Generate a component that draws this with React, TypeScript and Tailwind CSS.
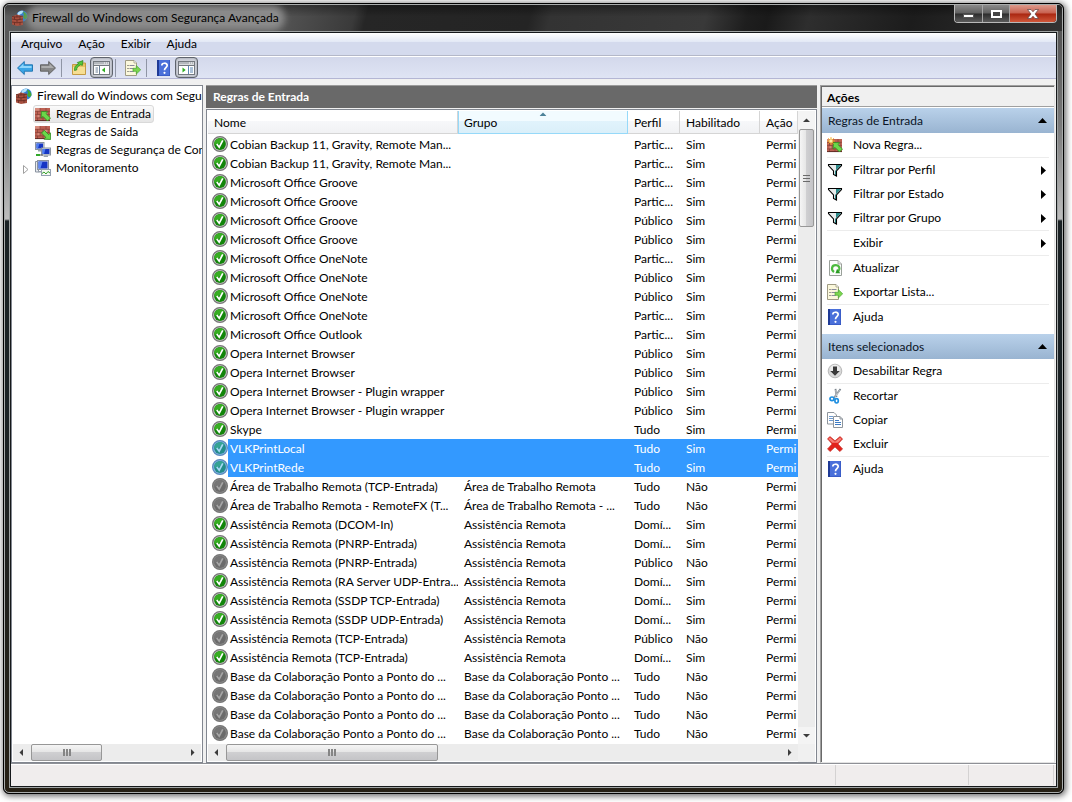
import { useState } from 'react';
import type { ReactNode } from 'react';

type Status = 'on' | 'off';

interface Rule {
  name: string;
  group: string;
  profile: string;
  enabled: string;
  status: Status;
}

const rule = (name: string, group: string, profile: string, enabled: string): Rule => ({
  name,
  group,
  profile,
  enabled,
  status: enabled === 'Sim' ? 'on' : 'off',
});

const RULES: Rule[] = [
  rule('Cobian Backup 11, Gravity, Remote Man...', '', 'Partic...', 'Sim'),
  rule('Cobian Backup 11, Gravity, Remote Man...', '', 'Partic...', 'Sim'),
  rule('Microsoft Office Groove', '', 'Partic...', 'Sim'),
  rule('Microsoft Office Groove', '', 'Partic...', 'Sim'),
  rule('Microsoft Office Groove', '', 'Público', 'Sim'),
  rule('Microsoft Office Groove', '', 'Público', 'Sim'),
  rule('Microsoft Office OneNote', '', 'Partic...', 'Sim'),
  rule('Microsoft Office OneNote', '', 'Público', 'Sim'),
  rule('Microsoft Office OneNote', '', 'Público', 'Sim'),
  rule('Microsoft Office OneNote', '', 'Partic...', 'Sim'),
  rule('Microsoft Office Outlook', '', 'Partic...', 'Sim'),
  rule('Opera Internet Browser', '', 'Público', 'Sim'),
  rule('Opera Internet Browser', '', 'Público', 'Sim'),
  rule('Opera Internet Browser - Plugin wrapper', '', 'Público', 'Sim'),
  rule('Opera Internet Browser - Plugin wrapper', '', 'Público', 'Sim'),
  rule('Skype', '', 'Tudo', 'Sim'),
  rule('VLKPrintLocal', '', 'Tudo', 'Sim'),
  rule('VLKPrintRede', '', 'Tudo', 'Sim'),
  rule('Área de Trabalho Remota (TCP-Entrada)', 'Área de Trabalho Remota', 'Tudo', 'Não'),
  rule('Área de Trabalho Remota - RemoteFX (T...', 'Área de Trabalho Remota - ...', 'Tudo', 'Não'),
  rule('Assistência Remota (DCOM-In)', 'Assistência Remota', 'Domí...', 'Sim'),
  rule('Assistência Remota (PNRP-Entrada)', 'Assistência Remota', 'Domí...', 'Sim'),
  rule('Assistência Remota (PNRP-Entrada)', 'Assistência Remota', 'Público', 'Não'),
  rule('Assistência Remota (RA Server UDP-Entra...', 'Assistência Remota', 'Domí...', 'Sim'),
  rule('Assistência Remota (SSDP TCP-Entrada)', 'Assistência Remota', 'Domí...', 'Sim'),
  rule('Assistência Remota (SSDP UDP-Entrada)', 'Assistência Remota', 'Domí...', 'Sim'),
  rule('Assistência Remota (TCP-Entrada)', 'Assistência Remota', 'Público', 'Não'),
  rule('Assistência Remota (TCP-Entrada)', 'Assistência Remota', 'Domí...', 'Sim'),
  rule('Base da Colaboração Ponto a Ponto do ...', 'Base da Colaboração Ponto ...', 'Tudo', 'Não'),
  rule('Base da Colaboração Ponto a Ponto do ...', 'Base da Colaboração Ponto ...', 'Tudo', 'Não'),
  rule('Base da Colaboração Ponto a Ponto do ...', 'Base da Colaboração Ponto ...', 'Tudo', 'Não'),
  rule('Base da Colaboração Ponto a Ponto do ...', 'Base da Colaboração Ponto ...', 'Tudo', 'Não'),
];

/* ---------- icons ---------- */

function Icon({ children }: { children: ReactNode }) {
  return (
    <svg width="16" height="16" viewBox="0 0 16 16" className="block shrink-0" aria-hidden="true">
      {children}
    </svg>
  );
}

function Bricks() {
  return (
    <g transform="translate(0 2)">
      <rect width="15" height="13" fill="#bd6153" />
      <path d="M0 0h5v3H0zM9 3.500h4v3H9zM2.500 7H5v2.500H2.500z" fill="#d68b7c" />
      <path d="M0 3.300h15M0 6.600h15M0 9.900h15M5 0v3.300M11 0v3.300M2.500 3.300v3.300M8 3.300v3.300M13 3.300v3.300M5 6.600v3.300M11 6.600v3.300M2.500 9.900V13M8 9.900V13" stroke="#7d3d33" strokeWidth=".6" />
      <path d="M0 12.600h15" stroke="#4a201b" strokeWidth=".8" />
    </g>
  );
}

function FirewallIcon() {
  return (
    <Icon>
      <circle cx="10" cy="6" r="5.600" fill="#2f7fd6" />
      <path d="M6 2.500C8 .5 10 .4 11.500 1L10 3.500 7 5 5 5z" fill="#b5e4fb" />
      <path d="M11 1.500c3 1 4.600 3.500 4.500 6L13 9.500 11 7l1-2z" fill="#3fa836" />
      <path d="M0 6.500l5-2 6 1.500v9L5 16l-5-1.500z" fill="#a9503f" />
      <path d="M0 9l5 .8L11 9M0 12l5 .8 6-.8M5 4.500V7M2.500 7v2.300M8 7v2.500M5 10v2.500M2.500 12.500V15M8 12.500V15M0 6.500l5 .6 6-1" stroke="#5a271f" strokeWidth=".7" fill="none" />
    </Icon>
  );
}

const ARROW_IN = 'M6.300 5.500l6.400.2-1.700 1.900 4.500 4.400-3 3-4.500-4.600-1.800 1.700z';
const ARROW_OUT = 'M15.600 15.500l-6.600-.3 1.800-1.900-4.300-4.200 2.800-2.800 4.300 4.300 1.900-1.700z';

function InboundIcon() {
  return (
    <Icon>
      <Bricks />
      <path d={ARROW_IN} fill="#6bd84a" stroke="#2d8a20" strokeWidth=".8" />
    </Icon>
  );
}

function OutboundIcon() {
  return (
    <Icon>
      <Bricks />
      <path d={ARROW_OUT} fill="#6bd84a" stroke="#2d8a20" strokeWidth=".8" />
    </Icon>
  );
}

function NewRuleIcon() {
  return (
    <Icon>
      <Bricks />
      <path d={ARROW_IN} fill="#6bd84a" stroke="#2d8a20" strokeWidth=".8" />
      <path d="M4 .2v7.600M.2 4h7.600M1.300 1.300l5.400 5.400M6.700 1.300L1.300 6.700" stroke="#f5a71c" />
      <circle cx="4" cy="4" r="1.700" fill="#fff0a0" />
    </Icon>
  );
}

function ComputersIcon() {
  return (
    <Icon>
      <rect x=".5" y=".5" width="8.500" height="7" fill="#d9dde3" stroke="#8a93a0" />
      <rect x="1.500" y="1.500" width="6.500" height="5" fill="#1636c4" />
      <path d="M1.500 1.500h3l-1.500 5H1.500z" fill="#4f7df0" />
      <path d="M3 8h4v1.500H3z" fill="#9aa2ad" />
      <rect x="6.500" y="6" width="9" height="7" fill="#d9dde3" stroke="#8a93a0" />
      <rect x="7.500" y="7" width="7" height="5" fill="#1636c4" />
      <path d="M7.500 7h3L9 12H7.500z" fill="#4f7df0" />
      <path d="M9 13.500h4V15H8.500z" fill="#9aa2ad" />
      <path d="M1 12h4v2H1z" fill="#32a82a" />
      <path d="M5 13h3" stroke="#555" />
    </Icon>
  );
}

function MonitoringIcon() {
  return (
    <Icon>
      <path d="M.5 1.500h3V12h-3z" fill="#e6e9ee" stroke="#8a93a0" />
      <rect x="2.500" y=".5" width="11" height="9" fill="#d9dde3" stroke="#8a93a0" />
      <rect x="3.500" y="1.500" width="9" height="7" fill="#1636c4" />
      <path d="M3.500 1.500h4l-2 7h-2z" fill="#5f8af5" />
      <path d="M3 11h6v1.500H3z" fill="#9aa2ad" />
      <rect x="6.500" y="9.500" width="9" height="6" fill="#f4f8f2" stroke="#93a0b0" />
      <path d="M7 13.500l2-1.500 2 2 2-2.500 2 1.500" stroke="#35a32c" fill="none" />
    </Icon>
  );
}

function BackIcon() {
  return (
    <Icon>
      <path d="M.5 8L7.300 1.500v3.300h8.200v6.400H7.300v3.300z" fill="#3aa5e6" stroke="#1b6fae" strokeWidth=".9" />
      <path d="M2 7.900L6.400 3.700v2.200h8.200v2z" fill="#8fd6fb" />
    </Icon>
  );
}

function ForwardIcon() {
  return (
    <Icon>
      <path d="M15.500 8L8.700 1.500v3.300H.5v6.400h8.200v3.300z" fill="#868686" stroke="#5a5a5a" strokeWidth=".9" />
      <path d="M14 7.900L9.600 3.700v2.200H1.400v2z" fill="#adadad" />
    </Icon>
  );
}

function FolderUpIcon() {
  return (
    <Icon>
      <path d="M1.500 4.500h5L8 3h6.500v11.500h-13z" fill="#e8c465" stroke="#c39a44" />
      <path d="M2 7h12v7H2z" fill="#f6de93" />
      <path d="M3.500 10.500C3 7.500 4.500 5 7.500 4L6.300 2.500 12 .6 11.300 5.500 9.800 4.700C7.300 5.800 5.500 7.500 5.700 10z" fill="#55c83c" stroke="#2b8420" strokeWidth=".7" />
    </Icon>
  );
}

/* Console pane toggles, the tree on the left or the actions on the right */
function PaneIcon({ side }: { side: 'left' | 'right' }) {
  return (
    <svg width="17" height="14" viewBox="0 0 17 14" className="block shrink-0" aria-hidden="true">
      <rect x=".5" y=".5" width="16" height="13" fill="#fff" stroke="#74797f" />
      <path d="M1 1h15v2.500H1z" fill="#b4b8bd" />
      <path d="M11 2h1M13 2h1M15 2h1" stroke="#fff" />
      <path d="M1 4.500h15" stroke="#74797f" />
      {side === 'left' ? (
        <>
          <path d="M6.500 5v8M2.500 7h2.500M2.500 9h2.500M2.500 11h2.500" stroke="#6b7f97" />
          <path d="M12 6.500v5L8.800 9z" fill="#2fae22" />
        </>
      ) : (
        <>
          <path d="M10.500 5v8M12 7h3M12 9h3M12 11h3" stroke="#5b86b4" />
          <path d="M4.500 6.500v5L7.700 9z" fill="#2fae22" />
        </>
      )}
    </svg>
  );
}

function ExportIcon() {
  return (
    <Icon>
      <path d="M.5.500H9L11.500 3v12.500H.5z" fill="#fbf8dc" stroke="#a09c84" />
      <path d="M9 .5V3h2.500" fill="#fff" stroke="#a09c84" strokeWidth=".8" />
      <path d="M2.500 5.500h1M2.500 8.500h1M2.500 11.500h1" stroke="#444" />
      <path d="M4.500 5.500h5M4.500 8.500h4M4.500 11.500h4" stroke="#8a8a9c" />
      <path d="M8 8.300h3.300V5.500l4.400 4.300-4.400 4.300v-2.800H8z" fill="#7bd64e" stroke="#4ba633" strokeWidth=".7" />
    </Icon>
  );
}

function HelpIcon() {
  return (
    <Icon>
      <rect x="1" width="13" height="16" fill="#2a4bb5" />
      <path d="M3 0h10.500v15.500H3z" fill="#4a70da" />
      <path d="M1 0h2v16H1z" fill="#1f3a96" />
      <path d="M5.800 5.500C5.800 2.500 11.200 2.500 11.200 5.300 11.200 7.600 8.500 7.600 8.500 10.200" stroke="#fff" strokeWidth="1.700" fill="none" />
      <circle cx="8.500" cy="12.800" r="1.100" fill="#fff" />
    </Icon>
  );
}

function FilterIcon() {
  return (
    <Icon>
      <path d="M1.500 2.500h13v1L9.500 9v5l-3-1.500V9l-5-5.500z" fill="#e8ecec" />
      <path d="M9 3h5L9 8.500z" fill="#2b8a8a" />
      <path d="M8 9l1-1v5.500l-1-.6z" fill="#2b8a8a" />
      <path d="M1.500 2.500h13v1L9.500 9v5l-3-1.500V9l-5-5.500z" fill="none" stroke="#000" strokeWidth="1.100" />
    </Icon>
  );
}

function RefreshIcon() {
  return (
    <Icon>
      <path d="M2.500.5H11L14.500 4v11.500h-12z" fill="#fdfdfd" stroke="#9aa09a" />
      <path d="M11 .5V4h3.500" fill="#e5e5e5" stroke="#9aa09a" strokeWidth=".8" />
      <path d="M7 12C3.600 9.500 4.800 5.200 8.500 5.200s5.200 3.500 2.900 6" stroke="#4cba3e" strokeWidth="2.200" fill="none" />
      <path d="M13.300 13.200H8.500l1.600-4.500z" fill="#2b9a24" />
    </Icon>
  );
}

function DisableIcon() {
  return (
    <Icon>
      <circle cx="8" cy="8" r="6.800" fill="#d9d9d9" stroke="#b9b9b9" />
      <circle cx="8" cy="6.500" r="4.800" fill="#ececec" />
      <path d="M6 3.500h4V8h2.800L8 12.800 3.200 8H6z" fill="#3a3a3a" />
    </Icon>
  );
}

function CutIcon() {
  return (
    <Icon>
      <path d="M8.500.8L9.500 9M13.500 1L6.500 10.500" stroke="#7d868e" strokeWidth="1.800" />
      <path d="M8.700 2l.7 6M13 2L7.500 9.500" stroke="#d5dade" strokeWidth=".7" />
      <ellipse cx="5" cy="10.800" rx="2" ry="1.800" fill="none" stroke="#1f8fe0" strokeWidth="1.700" />
      <ellipse cx="9.600" cy="12.800" rx="1.700" ry="2.200" fill="none" stroke="#1f8fe0" strokeWidth="1.700" />
    </Icon>
  );
}

function CopyIcon() {
  return (
    <Icon>
      <path d="M.5.500h6.500L9.500 3v9h-9z" fill="#fff" stroke="#8e959c" />
      <path d="M2 4.500h4M2 6.500h4M2 8.500h4" stroke="#6f9bd0" />
      <path d="M6.500 4.500H13L15.500 7v8.500h-9z" fill="#fff" stroke="#8e959c" />
      <path d="M13 4.500V7h2.500" fill="none" stroke="#8e959c" />
      <path d="M8 8.500h4M8 10.500h6M8 12.500h6" stroke="#3f7cc4" />
    </Icon>
  );
}

function DeleteIcon() {
  return (
    <Icon>
      <path d="M.5 2.800L3 .6l5 4.200L13 .6l2.600 2.300L11 7.900l4.600 5.100-2.800 2.500L8 10.900l-4.800 4.600L.5 13l4.600-5z" fill="#e2231c" stroke="#c4352e" strokeWidth=".7" />
      <path d="M1.300 2.800L3 1.400l5 4.300 5-4.300 1.700 1.500L11 6.800H5.200z" fill="#f58078" />
    </Icon>
  );
}

function CheckIcon({ status, selected }: { status: Status; selected: boolean }) {
  let rim = '#777';
  let light = '#c9c9c9';
  let fill = '#12850a';
  let top = '#37ad22';
  let mark = '#fff';
  if (status === 'off') {
    rim = '#777';
    light = '#8c8c8c';
    fill = '#6b6b6b';
    top = '#767676';
    mark = '#a6a6a6';
  } else if (selected) {
    rim = '#5a8bbd';
    light = '#84b6e6';
    fill = '#238c8a';
    top = '#35a394';
    mark = '#a5d8f5';
  }
  return (
    <Icon>
      <circle cx="8" cy="8" r="7.400" fill={light} stroke={rim} strokeWidth="1.200" />
      <circle cx="8" cy="8" r="5.900" fill={fill} />
      <path d="M2.300 8.500a5.700 5.700 0 0110-4.300C9 5 8 9.500 2.300 8.500z" fill={top} />
      <path d="M4.800 8l2.400 3.200L10.800 4.300" stroke={mark} strokeWidth="1.700" fill="none" />
    </Icon>
  );
}

/* ---------- scroll bars ---------- */

function Triangle({ d }: { d: string }) {
  return (
    <svg width="7" height="7" viewBox="0 0 7 7" className="block shrink-0" aria-hidden="true">
      <path d={d} fill="#3c3c3c" />
    </svg>
  );
}

function Grip({ vertical = false }: { vertical?: boolean }) {
  const bar = vertical ? 'h-px w-[7px] bg-[#6a6a6a]' : 'h-[7px] w-0.5 bg-[#858585]';
  return (
    <span className={vertical ? 'flex flex-col gap-0.5' : 'flex gap-px'}>
      <span className={bar} />
      <span className={bar} />
      <span className={bar} />
    </span>
  );
}

function HScroll({ thumb }: { thumb: string }) {
  return (
    <div className="mb-px flex h-[17px] min-w-0 flex-1 items-stretch bg-[#ececec]">
      <button aria-label="Rolar para a esquerda" className="flex w-[18px] shrink-0 items-center justify-center pr-0.5">
        <Triangle d="M5 0v7L1.500 3.500z" />
      </button>
      <div
        className={`flex items-center justify-center rounded-[2px] border border-[#979797] bg-[linear-gradient(to_bottom,#f5f5f5,#e6e6e6_45%,#cfcfd1_50%,#c4c4c7)] ${thumb}`}
      >
        <Grip />
      </div>
      <button aria-label="Rolar para a direita" className="ml-auto flex w-[18px] shrink-0 items-center justify-center">
        <Triangle d="M2 0v7l3.500-3.500z" />
      </button>
    </div>
  );
}

function VScroll() {
  return (
    <div className="flex w-[17px] shrink-0 flex-col bg-[#ececec]">
      <button aria-label="Rolar para cima" className="flex h-[18px] shrink-0 items-center justify-center bg-[#f4f4f4]">
        <Triangle d="M0 5h7L3.500 1.500z" />
      </button>
      <div className="mx-px flex h-[98px] items-center justify-center rounded-[2px] border border-[#979797] bg-[linear-gradient(to_right,#f5f5f5,#e6e6e6_45%,#cfcfd1_50%,#c4c4c7)]">
        <Grip vertical />
      </div>
      <button aria-label="Rolar para baixo" className="mt-auto flex h-[17px] shrink-0 items-center justify-center bg-[#f4f4f4]">
        <Triangle d="M0 2h7L3.500 5.500z" />
      </button>
    </div>
  );
}

/* ---------- window chrome ---------- */

function TitleBar() {
  return (
    <header className="flex h-[26px] items-start bg-[linear-gradient(to_bottom,rgba(0,0,0,0.35),transparent_45%),linear-gradient(105deg,#5c5c5c_0,#505050_280px,#3a3a3a_340px,#262626_352px,#242424_510px,#333_530px,#393939_680px,#1e1e1e_720px,#1a1a1a_740px,#2e2e2e_780px,#1c1c1c_880px,#333_100%)]">
      <div className="flex h-[26px] flex-1 items-center gap-1 pl-[7px]">
        <FirewallIcon />
        <h1 className="rounded-full bg-[#8a8a8a] leading-[14px] text-black shadow-[0_0_7px_6px_#8a8a8a]">
          Firewall do Windows com Segurança Avançada
        </h1>
      </div>
      <div className="mr-[5px] flex h-[18px] overflow-hidden rounded-b-[4px] border border-t-0 border-[#b9b9b9] bg-[#111]">
        <button
          aria-label="Minimizar"
          className="flex w-[28px] items-end justify-center border-r border-[#a5a5a5] bg-[linear-gradient(to_bottom,#8a8a8a,#606060_48%,#2c2c2c_52%,#5c5c5c)] pb-1"
        >
          <span className="h-[4px] w-[11px] border border-[#555] bg-white" />
        </button>
        <button
          aria-label="Maximizar"
          className="flex w-[27px] items-center justify-center border-r border-[#a5a5a5] bg-[linear-gradient(to_bottom,#8a8a8a,#606060_48%,#2c2c2c_52%,#5c5c5c)]"
        >
          <span className="h-[8px] w-[11px] border-2 border-white bg-[#444]" />
        </button>
        <button
          aria-label="Fechar"
          className="flex w-[46px] items-center justify-center bg-[linear-gradient(to_bottom,#dc9a8c,#c8604e_48%,#a92610_52%,#d0573a)]"
        >
          <svg width="12" height="10" viewBox="0 0 12 10" aria-hidden="true">
            <path d="M.5.500h3.500L6 2.800 8 .5h3.500L8 5l3.500 4.500H8L6 7.200 4 9.500H.5L4 5z" fill="#fff" stroke="#5a4040" strokeWidth=".7" />
          </svg>
        </button>
      </div>
    </header>
  );
}

function MenuBar() {
  return (
    <nav className="flex h-[23px] shrink-0 items-center border-b border-[#b4b8c8] bg-[linear-gradient(to_bottom,#fff,#e2e8f5_9px,#d4daed_9px)] pl-0.5">
      {['Arquivo', 'Ação', 'Exibir', 'Ajuda'].map(label => (
        <button key={label} className="px-2 leading-[20px]">
          {label}
        </button>
      ))}
    </nav>
  );
}

function ToolButton({ label, pressed, children }: { label: string; pressed?: boolean; children: ReactNode }) {
  return (
    <button
      aria-label={label}
      className={`flex h-[21px] w-[23px] items-center justify-center ${
        pressed ? 'rounded-[4px] border border-[#5f646d] bg-[#cdd0d8] shadow-[inset_0_0_2px_#8a8f99]' : ''
      }`}
    >
      {children}
    </button>
  );
}

function ToolSeparator() {
  return <span className="ml-0.5 mr-[5px] h-[18px] w-px bg-[#8f95a5]" />;
}

function ToolBar() {
  return (
    <div className="flex h-[23px] shrink-0 items-center border-b border-t border-b-[#b4b6d4] border-t-white bg-[linear-gradient(to_bottom,#d3d8eb,#dfe4f4)] pl-0.5">
      <ToolButton label="Voltar"><BackIcon /></ToolButton>
      <ToolButton label="Avançar"><ForwardIcon /></ToolButton>
      <ToolSeparator />
      <ToolButton label="Subir um nível"><FolderUpIcon /></ToolButton>
      <ToolButton label="Mostrar árvore" pressed><PaneIcon side="left" /></ToolButton>
      <ToolSeparator />
      <ToolButton label="Exportar lista"><ExportIcon /></ToolButton>
      <ToolSeparator />
      <ToolButton label="Ajuda"><HelpIcon /></ToolButton>
      <ToolButton label="Mostrar painel de ações" pressed><PaneIcon side="right" /></ToolButton>
    </div>
  );
}

/* ---------- panes ---------- */

function TreePane() {
  const [current, setCurrent] = useState('Regras de Entrada');
  const items = [
    { label: 'Regras de Entrada', icon: <InboundIcon /> },
    { label: 'Regras de Saída', icon: <OutboundIcon /> },
    { label: 'Regras de Segurança de Con', icon: <ComputersIcon /> },
    { label: 'Monitoramento', icon: <MonitoringIcon />, expandable: true },
  ];
  return (
    <aside className="flex w-[192px] shrink-0 flex-col overflow-hidden border border-[#828790] bg-white">
      <ul className="min-h-0 flex-1 overflow-hidden whitespace-nowrap pt-px">
        <li>
          <button className="flex h-[18px] items-center gap-[5px] pl-1">
            <FirewallIcon />
            Firewall do Windows com Segu
          </button>
        </li>
        {items.map(item => (
          <li key={item.label} className="flex h-[18px] items-center">
            <span className="flex w-[21px] shrink-0 justify-end pr-1 pt-0.5">
              {item.expandable && (
                <svg width="6" height="9" viewBox="0 0 6 9" aria-hidden="true">
                  <path d="M.5.500v8l4.500-4z" fill="#fff" stroke="#a0a0a0" />
                </svg>
              )}
            </span>
            <button
              onClick={() => setCurrent(item.label)}
              className={`flex h-[18px] items-center gap-[5px] rounded-[3px] border pl-px pr-0.5 ${
                current === item.label ? 'border-[#d9d9d9] bg-[linear-gradient(to_bottom,#fafafa,#e6e6e6)]' : 'border-transparent'
              }`}
            >
              {item.icon}
              <span>{item.label}</span>
            </button>
          </li>
        ))}
      </ul>
      <div className="flex shrink-0 px-px">
        <HScroll thumb="w-[71px]" />
      </div>
    </aside>
  );
}

function HeaderCell({ label, sorted }: { label: string; sorted?: boolean }) {
  return (
    <th className="h-[24px] p-0 text-left align-top font-normal">
      <button
        className={`relative block h-[23px] w-full overflow-hidden border-b border-r text-left leading-[24px] ${
          sorted
            ? 'border-l border-[#96d9f9] bg-[linear-gradient(to_bottom,#f2fbff_45%,#e1f3fc_45%,#daeff9)] pl-[5px]'
            : 'border-[#d5d5d5] bg-[linear-gradient(to_bottom,#fff_45%,#f7f8fa_45%,#f1f2f4)] pl-[6px]'
        }`}
      >
        {label}
        {sorted && (
          <svg width="7" height="4" viewBox="0 0 7 4" className="absolute left-1/2 top-px -translate-x-1/2" aria-hidden="true">
            <path d="M0 4h7L3.500.5z" fill="#4d8299" />
          </svg>
        )}
      </button>
    </th>
  );
}

function RuleList() {
  const [selected, setSelected] = useState([16, 17]);
  return (
    <table className="w-full table-fixed border-collapse whitespace-nowrap">
      <colgroup>
        <col className="w-[250px]" />
        <col className="w-[170px]" />
        <col className="w-[52px]" />
        <col className="w-[80px]" />
        <col />
      </colgroup>
      <thead>
        <tr>
          <HeaderCell label="Nome" />
          <HeaderCell label="Grupo" sorted />
          <HeaderCell label="Perfil" />
          <HeaderCell label="Habilitado" />
          <HeaderCell label="Ação" />
        </tr>
      </thead>
      <tbody>
        {RULES.map((r, i) => {
          const isSelected = selected.includes(i);
          const cell = `overflow-hidden p-0 pl-[6px] ${isSelected ? 'bg-[#3399ff] text-white' : ''}`;
          return (
            <tr key={i} onClick={() => setSelected([i])} className="h-[19px] leading-[19px]">
              <td className="overflow-hidden p-0">
                <div className="flex h-[19px] pl-1">
                  <span className="shrink-0 pt-px">
                    <CheckIcon status={r.status} selected={isSelected} />
                  </span>
                  <span className={`min-w-0 flex-1 pl-0.5 ${isSelected ? 'bg-[#3399ff] text-white' : ''}`}>{r.name}</span>
                </div>
              </td>
              <td className={cell}>{r.group}</td>
              <td className={cell}>{r.profile}</td>
              <td className={cell}>{r.enabled}</td>
              <td className={cell}>Permi</td>
            </tr>
          );
        })}
      </tbody>
    </table>
  );
}

function RulesPane() {
  return (
    <main className="flex min-w-0 flex-1 flex-col">
      <h2 className="h-[23px] shrink-0 border-t border-[#9a9a9a] bg-[#696969] pl-[7px] font-bold leading-[22px] text-white">
        Regras de Entrada
      </h2>
      <div className="mt-px flex min-h-0 flex-1 flex-col border border-[#828790] bg-white pl-px pt-px">
        <div className="flex min-h-0 flex-1 pr-px">
          <div className="min-w-0 flex-1 overflow-hidden">
            <RuleList />
          </div>
          <VScroll />
        </div>
        <div className="flex shrink-0 pr-px">
          <HScroll thumb="w-[212px]" />
          <span className="w-[17px] bg-[#f0f0f0]" />
        </div>
      </div>
    </main>
  );
}

interface Action {
  label: string;
  icon?: ReactNode;
  submenu?: boolean;
  divider?: boolean;
}

function ActionSection({ title, actions }: { title: string; actions: Action[] }) {
  return (
    <section className="pb-[5px]">
      <button className="flex h-[25px] w-full items-center justify-between bg-[linear-gradient(to_bottom,#b9d1ea,#99b4d1)] pl-[6px] pr-[7px] text-[#0a1426]">
        {title}
        <svg width="9" height="5" viewBox="0 0 9 5" aria-hidden="true">
          <path d="M0 5h9L4.500 0z" fill="#000" />
        </svg>
      </button>
      <ul className="pl-[5px] pr-[5px]">
        {actions.map(a => (
          <li key={a.label} className={a.divider ? 'border-b border-[#ececec]' : ''}>
            <button className="flex h-[24px] w-full items-center text-left">
              <span className="w-[26px] shrink-0">{a.icon}</span>
              <span className="flex-1">{a.label}</span>
              {a.submenu && (
                <svg width="5" height="9" viewBox="0 0 5 9" className="mr-[3px]" aria-hidden="true">
                  <path d="M0 0v9l5-4.500z" fill="#000" />
                </svg>
              )}
            </button>
          </li>
        ))}
      </ul>
    </section>
  );
}

function ActionsPane() {
  return (
    <aside className="flex w-[235px] shrink-0 border border-b-[#e3e3e3] border-l-[#a0a0a0] border-r-[#e3e3e3] border-t-[#a0a0a0]">
      <div className="flex-1 border-l border-t border-[#696969] bg-white">
        <h2 className="mb-px h-[20px] border-b border-[#a0a0a0] bg-[#f0f0f0] pl-[5px] font-bold leading-[21px] text-black">Ações</h2>
        <ActionSection
          title="Regras de Entrada"
          actions={[
            { label: 'Nova Regra...', icon: <NewRuleIcon />, divider: true },
            { label: 'Filtrar por Perfil', icon: <FilterIcon />, submenu: true },
            { label: 'Filtrar por Estado', icon: <FilterIcon />, submenu: true },
            { label: 'Filtrar por Grupo', icon: <FilterIcon />, submenu: true, divider: true },
            { label: 'Exibir', submenu: true, divider: true },
            { label: 'Atualizar', icon: <RefreshIcon /> },
            { label: 'Exportar Lista...', icon: <ExportIcon />, divider: true },
            { label: 'Ajuda', icon: <HelpIcon /> },
          ]}
        />
        <ActionSection
          title="Itens selecionados"
          actions={[
            { label: 'Desabilitar Regra', icon: <DisableIcon />, divider: true },
            { label: 'Recortar', icon: <CutIcon /> },
            { label: 'Copiar', icon: <CopyIcon /> },
            { label: 'Excluir', icon: <DeleteIcon />, divider: true },
            { label: 'Ajuda', icon: <HelpIcon /> },
          ]}
        />
      </div>
    </aside>
  );
}

function StatusBar() {
  return (
    <footer className="flex h-[23px] shrink-0 justify-end border-t border-[#8e9096] bg-[#f0eded] shadow-[inset_0_1px_#fff]">
      <span className="my-px w-[133px] border-l border-[#d4d2d2]" />
      <span className="my-px mr-0.5 w-[86px] border-l border-r border-[#d4d2d2]" />
    </footer>
  );
}

export default function App() {
  return (
    <div className="flex h-screen flex-col overflow-hidden bg-white pb-2 pl-[3px] pr-2 pt-[3px] font-['Lato','Open_Sans',sans-serif] text-[12px] text-black">
      <div className="flex min-h-0 flex-1 flex-col rounded-[6px] border border-black bg-black shadow-[1px_1px_6px_1px_rgba(0,0,0,0.6)]">
        <div className="flex min-h-0 flex-1 flex-col overflow-hidden rounded-[5px] border border-[#a9acac] bg-[linear-gradient(to_bottom,#555_0,#5a5a5a_40px,#7a7a7a_120px,#bdbdbd_214px,#1b2225_216px,#1b2225_400px,#262015_100%)]">
          <TitleBar />
          <div className="mx-1 mb-1 flex min-h-0 flex-1 border border-[#9fa3a3]">
            <div className="flex min-w-0 flex-1 flex-col border border-[#15181a] bg-[#f0f0f0]">
              <MenuBar />
              <ToolBar />
              <div className="flex min-h-0 flex-1 gap-[3px] pr-px pt-[6px]">
                <TreePane />
                <RulesPane />
                <ActionsPane />
              </div>
              <StatusBar />
            </div>
          </div>
        </div>
      </div>
    </div>
  );
}
